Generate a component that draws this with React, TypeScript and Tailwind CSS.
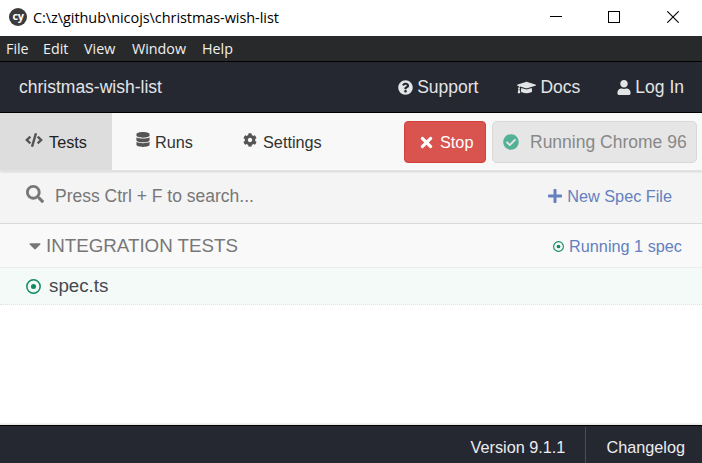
import React from "react";
import {
  FaQuestionCircle,
  FaGraduationCap,
  FaUser,
  FaTimes,
  FaCheckCircle,
  FaCode,
  FaDatabase,
  FaCog,
  FaSearch,
  FaPlus,
  FaCaretDown,
} from "react-icons/fa";

const menuItems = [
  { label: "File", width: "w-[37px]" },
  { label: "Edit", width: "w-[41px]" },
  { label: "View", width: "w-[48px]" },
  { label: "Window", width: "w-[70px]" },
  { label: "Help", width: "w-[40px]" },
];

function RunningDot({ className }: { className: string }) {
  return (
    <svg viewBox="0 0 16 16" className={className} fill="none">
      <circle cx="8" cy="8" r="7.1" stroke="#0f8a64" strokeWidth="1.6" />
      <circle cx="8" cy="8" r="2.7" fill="#0f8a64" />
    </svg>
  );
}

function TitleBar() {
  return (
    <div className="flex h-9 shrink-0 items-center bg-white pl-[9px] text-black">
      <div className="mb-[2px] flex size-[18px] items-center justify-center rounded-full bg-[#3b3b3c]">
        <span className="-mt-[3px] font-['Open_Sans',sans-serif] text-[11px] leading-none font-bold tracking-[-0.5px] text-white">cy</span>
      </div>
      <span className="ml-[6px] font-['Open_Sans','Noto_Sans',sans-serif] text-[14.5px] leading-none tracking-[-0.07px] whitespace-nowrap">
        C:\z\github\nicojs\christmas-wish-list
      </span>
      <div className="mr-[23px] mb-[2px] ml-auto flex items-center gap-[46px]">
        <svg className="h-3 w-3" viewBox="0 0 12 12" shapeRendering="crispEdges">
          <path d="M0 5.5h12" stroke="#000" />
        </svg>
        <svg className="mr-px h-3 w-3" viewBox="0 0 12 12" fill="none" shapeRendering="crispEdges">
          <path d="M.5.5h11v11H.5z" stroke="#000" />
        </svg>
        <svg className="h-3 w-3" viewBox="0 0 12 12" fill="none">
          <path d="M.3.3l11.4 11.4M11.7.3L.3 11.7" stroke="#000" strokeWidth="1.1" />
        </svg>
      </div>
    </div>
  );
}

function MenuBar() {
  return (
    <div className="flex h-[26px] shrink-0 items-center border-b border-black bg-[#28292b] pt-px pl-[6px] font-['Open_Sans','Noto_Sans',sans-serif] text-[14.3px] leading-none text-[#f0f0f0]">
      {menuItems.map((item) => (
        <span key={item.label} className={item.width}>{item.label}</span>
      ))}
    </div>
  );
}

function Header() {
  return (
    <div className="flex h-[51px] shrink-0 items-center border-b border-black bg-[#252831] pr-[18px] pl-[19px] text-[17.5px] leading-5 text-[#e3e4e6]">
      <span>christmas-wish-list</span>
      <div className="ml-auto flex items-center gap-[37px]">
        <span className="mr-[2px] flex items-center gap-[4px]"><FaQuestionCircle className="size-[15px]" />Support</span>
        <span className="flex items-center gap-[4px]"><FaGraduationCap className="h-[15px] w-[19px]" />Docs</span>
        <span className="flex items-center gap-[4px]"><FaUser className="h-[15px] w-[14px]" />Log In</span>
      </div>
    </div>
  );
}

function Tabs() {
  return (
    <div className="z-10 flex h-[58px] shrink-0 border-b border-[#e3e3e3] bg-[#f8f8f8] text-[16.25px] leading-5 text-[#333] shadow-[0_1px_2px_rgba(0,0,0,0.12)]">
      <div className="flex w-[112px] items-center bg-[#ddd] pl-[25px] text-[#222]">
        <FaCode className="mr-[6px] mb-[4px] h-[14px] w-[18px] text-[#555]" />
        Tests
      </div>
      <div className="flex w-[107px] items-center pl-[24px]">
        <FaDatabase className="mr-[5px] mb-[4px] h-[15px] w-[14px] text-[#555]" />
        Runs
      </div>
      <div className="flex items-center pl-[24px]">
        <FaCog className="mr-[6px] mb-[4px] size-[14px] text-[#555]" />
        Settings
      </div>
      <div className="mt-2 mr-[5px] ml-auto flex h-[42px] gap-[6px]">
        <button className="flex w-[82px] items-center rounded-[4px] border border-[#d43f3a] bg-[#d9534f] pl-[13px] text-[16.25px] text-white">
          <FaTimes className="mr-[5px] size-[17px]" />
          Stop
        </button>
        <div className="flex w-[205px] items-center rounded-[5px] border border-[#d8d8d8] bg-[#e6e6e6] pl-[10px] text-[17.5px] text-[#888]">
          <FaCheckCircle className="mr-[11px] size-[16px] text-[#53b195]" />
          Running Chrome 96
        </div>
      </div>
    </div>
  );
}

export default function App() {
  return (
    <div className="flex h-[463px] w-[702px] flex-col overflow-hidden bg-white font-['Liberation_Sans',Arial,sans-serif]">
      <TitleBar />
      <MenuBar />
      <Header />
      <Tabs />
      <div className="flex h-[53px] shrink-0 items-center border-b border-[#d9d9d9] bg-[#f4f4f4] pr-[30px] pb-[2px] pl-[26px] text-[17.5px] leading-5 text-[#777]">
        <FaSearch className="mr-[11px] mb-[4px] size-[18px]" />
        Press Ctrl + F to search...
        <span className="ml-auto flex items-center gap-[4px] text-[16.25px] text-[#6480bd]">
          <FaPlus className="size-[16px]" />
          New Spec File
        </span>
      </div>
      <div className="flex h-11 shrink-0 items-center border-b border-[#e9eeeb] bg-[#f9f9f9] pr-5 pl-[29px] text-[18.75px] leading-5 text-[#777]">
        <FaCaretDown className="mr-[5px] h-[19px] w-[12px]" />
        INTEGRATION TESTS
        <span className="ml-auto flex items-center gap-[5px] text-[16.25px] text-[#6480bd]">
          <RunningDot className="mt-[2px] size-[11px]" />
          Running 1 spec
        </span>
      </div>
      <div className="flex h-[37px] shrink-0 items-center border-b border-dotted border-[#dce5e0] bg-[#f4faf7] pl-[26px] text-[18.75px] leading-5 text-[#48494f]">
        <RunningDot className="mr-2 size-[15px]" />
        spec.ts
      </div>
      <div className="grow bg-white" />
      <div className="flex h-[38px] shrink-0 justify-end border-t border-black bg-[#252831] text-[16.25px] leading-5 text-[#ececee] shadow-[0_-1px_2px_rgba(0,0,0,0.15)]">
        <div className="mt-px flex items-center border-r border-[#494c5e] pt-[3px] pr-5">Version 9.1.1</div>
        <div className="mt-px flex items-center pt-[3px] pr-[17px] pl-5">Changelog</div>
      </div>
    </div>
  );
}
